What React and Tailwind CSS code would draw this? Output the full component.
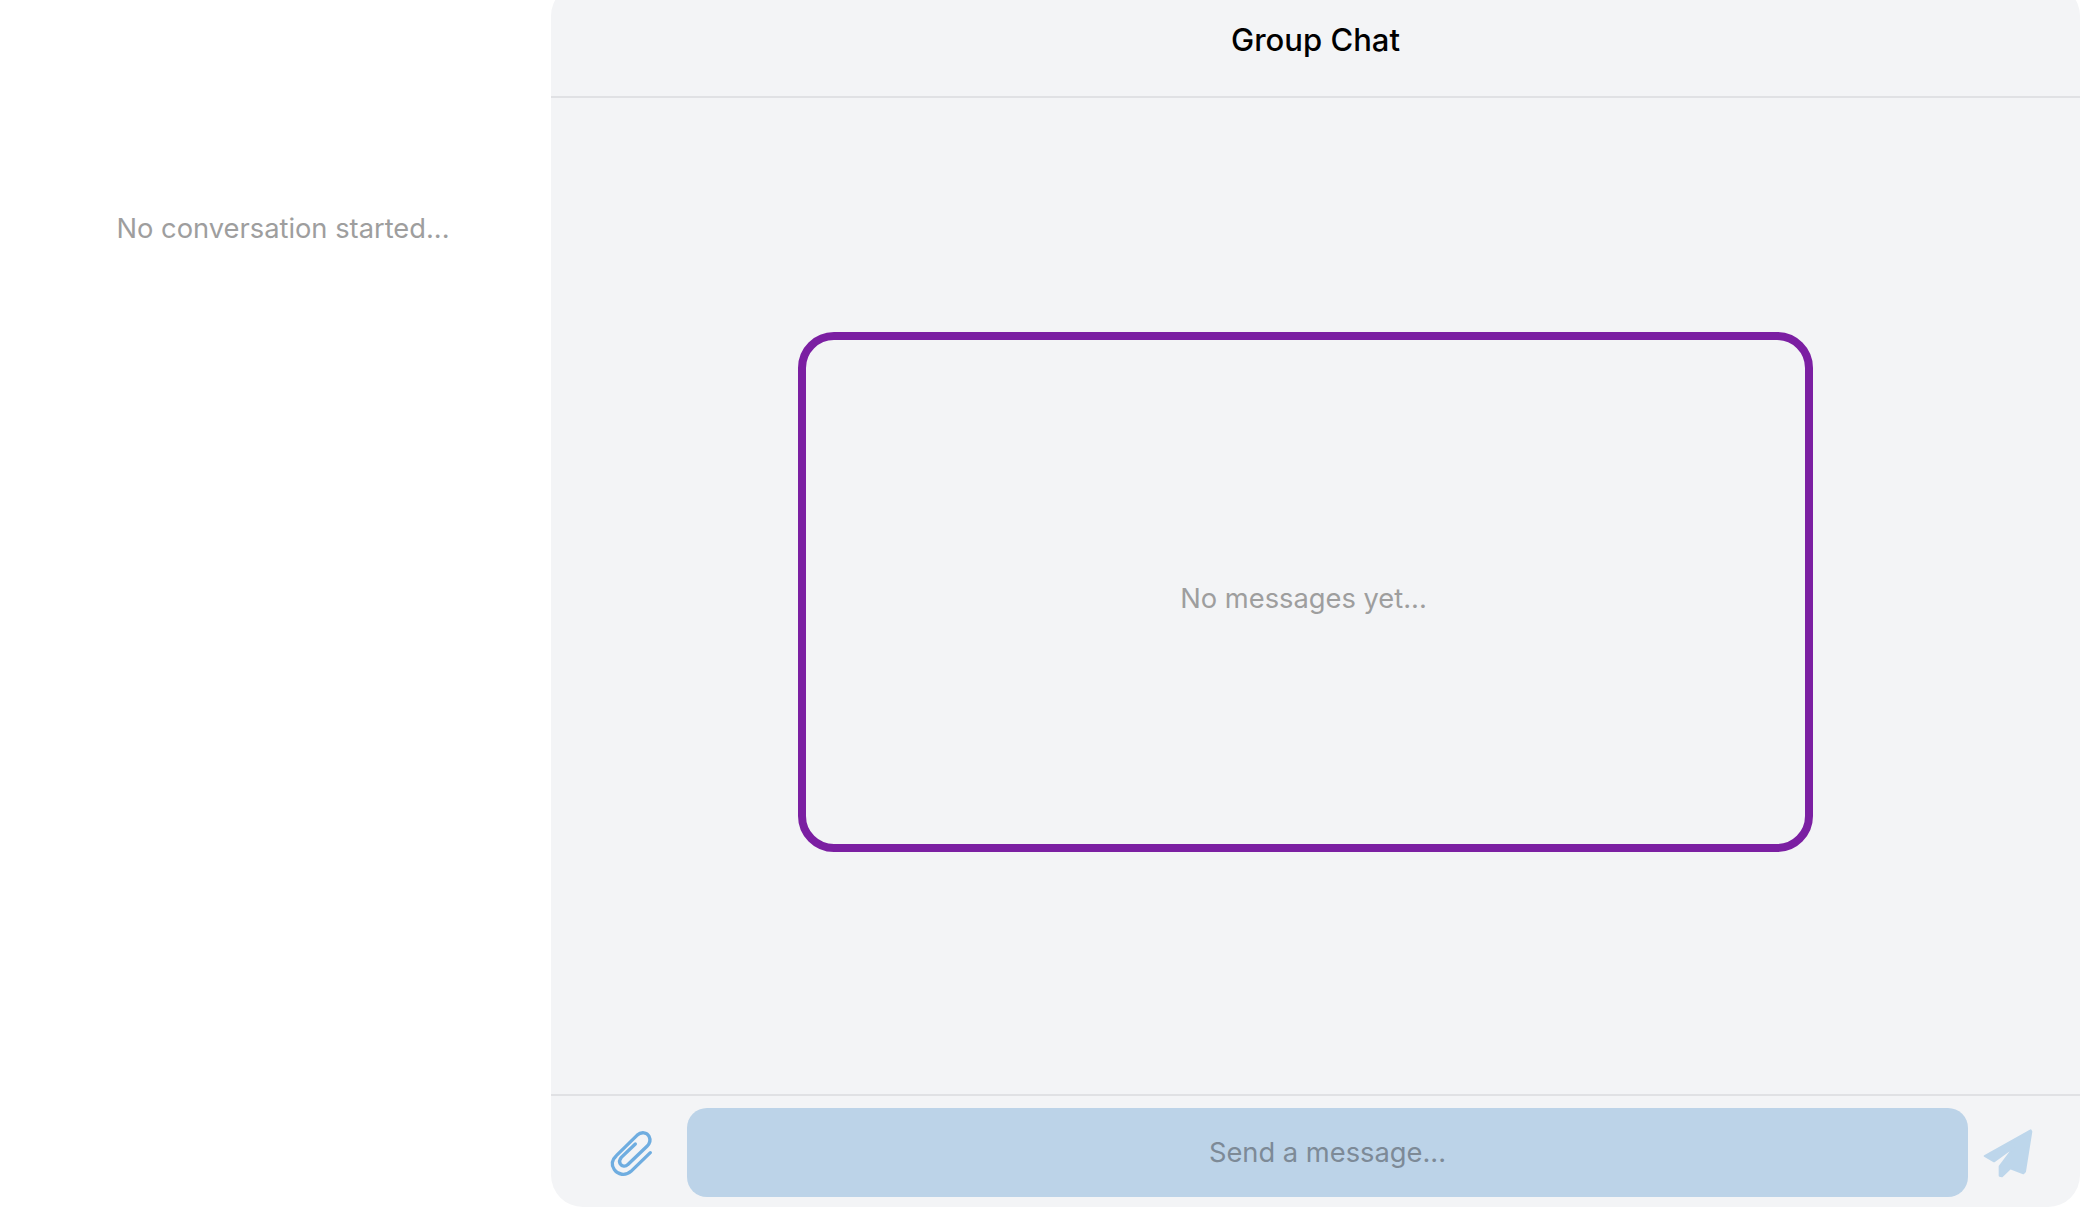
const font = "font-['Inter',sans-serif]";

function PaperclipIcon() {
  return (
    <svg viewBox="200 200 150 150" className="w-[50px] h-[50px]" fill="none" stroke="#6fade0" strokeWidth="10" strokeLinecap="round">
      <path d="M330 274 L272 330 C255 345 232 340 222 325 C212 310 215 295 228 283 L290 222 C303 210 320 213 326 225 C332 237 328 247 320 255 L262 310 C255 317 245 315 240 308 C235 300 237 295 243 288 L285 248" />
    </svg>
  );
}

function SendIcon() {
  return (
    <svg viewBox="250 200 150 150" className="w-[50px] h-[50px]" fill="#bdd6eb" stroke="#bdd6eb" strokeWidth="6" strokeLinejoin="round">
      <path d="M393 207 L255 284 L283 300 L345 255 L300 315 L300 343 L307 345 L332 321 L371 336 L376 331 L395 211 Z" />
    </svg>
  );
}

export default function App() {
  return (
    <div className={`h-[1224px] w-[2096px] overflow-hidden bg-white flex ${font}`}>
      <aside className="w-[551px] shrink-0 pt-[212px] pl-[15px] text-center">
        <p className="text-[27.3px] leading-[34px] text-[#9e9e9e]">No conversation started...</p>
      </aside>

      <section className="w-[1529px] h-[1223px] -mt-[16px] bg-gray-100 rounded-[32px] flex flex-col">
        <header className="h-[114px] shrink-0 border-b-2 border-[#e0e1e4] flex items-center justify-center">
          <h1 className="text-[31px] font-medium text-black">Group Chat</h1>
        </header>

        <main className="flex-1 pl-[247px] pt-[234px]">
          <div className="w-[1015px] h-[520px] pt-[14px] pr-[4px] border-8 border-[#7b1fa2] rounded-[36px] flex items-center justify-center">
            <p className="text-[27.3px] text-[#9e9e9e]">No messages yet...</p>
          </div>
        </main>

        <footer className="h-[113px] shrink-0 pt-[2px] border-t-2 border-[#e0e1e4] flex items-center">
          <div className="w-[136px] shrink-0 pl-[56px]">
            <PaperclipIcon />
          </div>
          <div className="w-[1281px] h-[89px] shrink-0 pt-[2px] rounded-[20px] bg-[#bcd3e8] flex items-center justify-center text-[27.3px] text-[#7d8a97]">
            Send a message...
          </div>
          <div className="pl-[15px]">
            <SendIcon />
          </div>
        </footer>
      </section>
    </div>
  );
}
